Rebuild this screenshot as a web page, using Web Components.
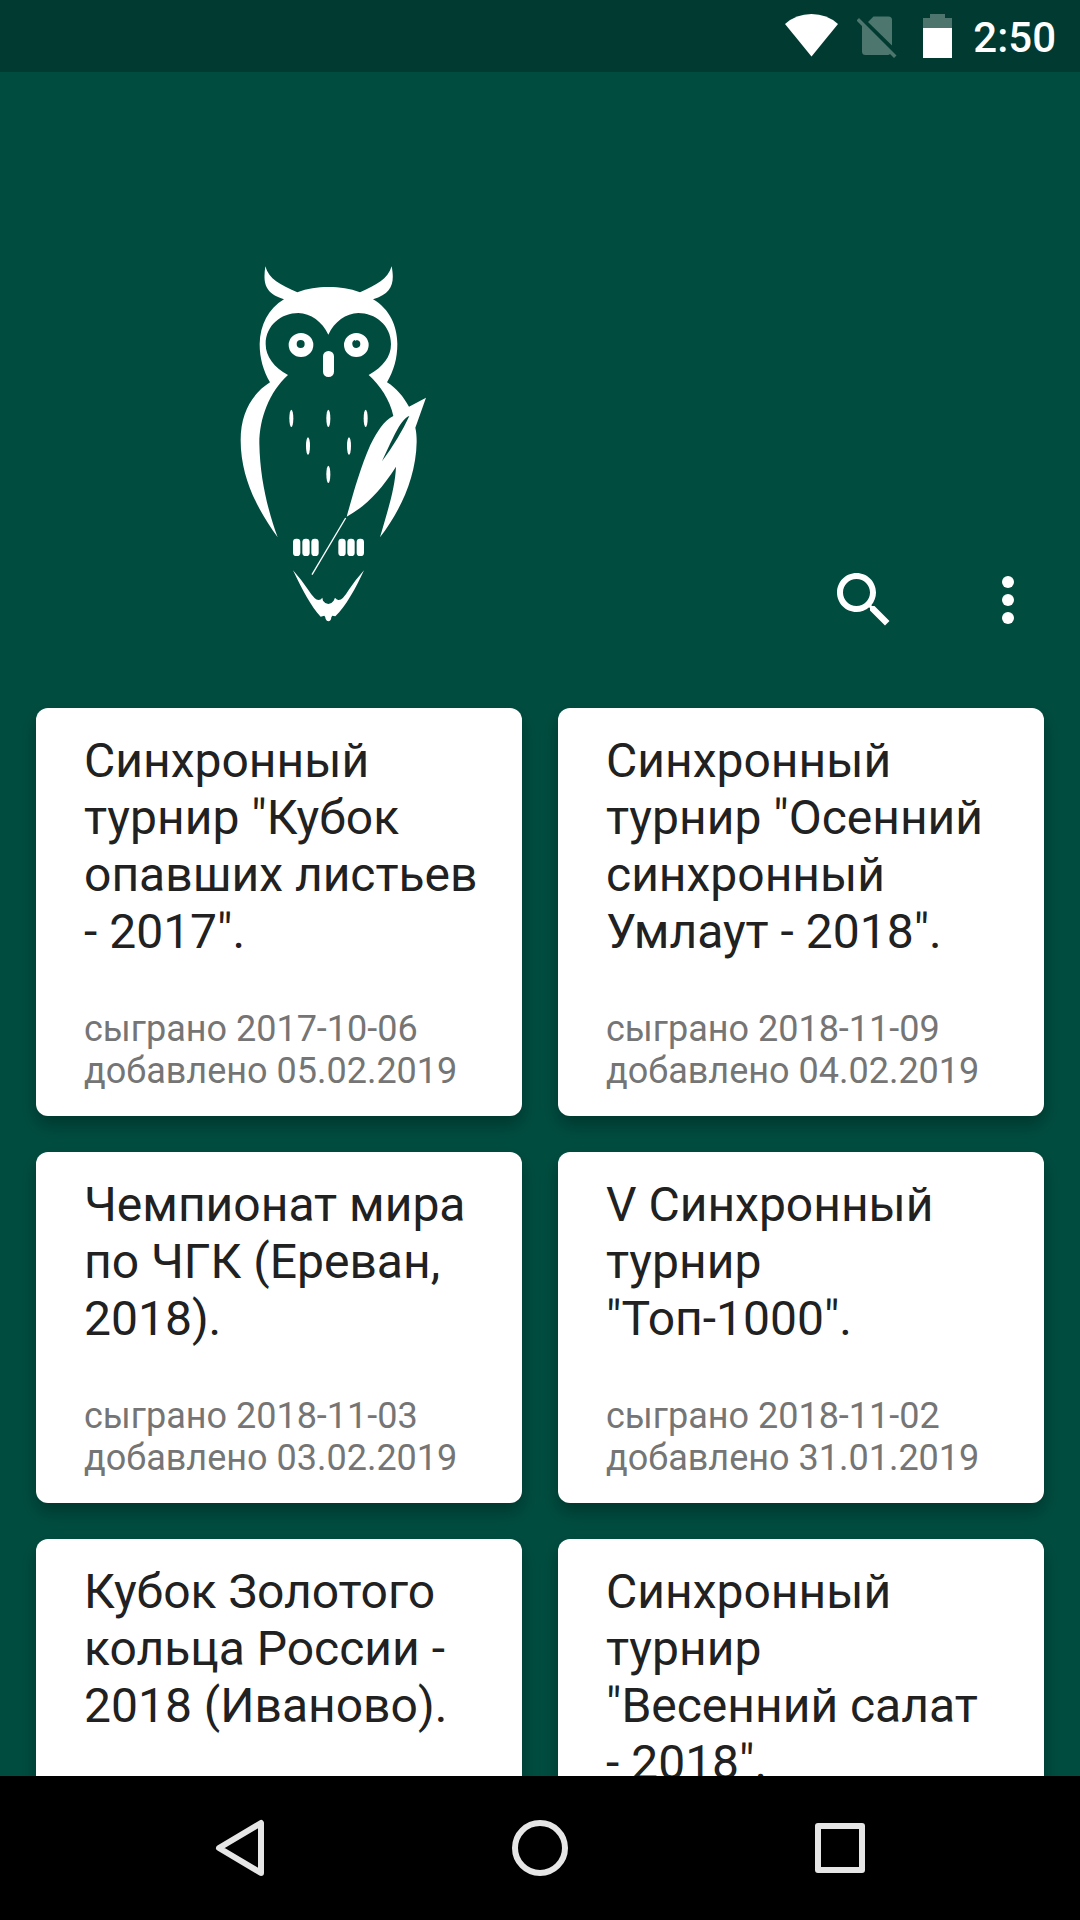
<!DOCTYPE html>
<html lang="ru">
<head>
<meta charset="utf-8">
<meta name="viewport" content="width=device-width, initial-scale=1">
<title>Турниры</title>
<style>
  body {
    margin: 0;
    background: #004d40;
    font-family: Roboto, "Noto Sans", sans-serif;
  }
</style>
</head>
<body>
<quiz-app>
  <status-bar slot="status" time="2:50"></status-bar>
  <app-header></app-header>
  <tournament-list>
    <tournament-card played="2017-10-06" added="05.02.2019">Синхронный турнир "Кубок опавших листьев - 2017".</tournament-card>
    <tournament-card played="2018-11-09" added="04.02.2019">Синхронный турнир "Осенний синхронный Умлаут - 2018".</tournament-card>
    <tournament-card played="2018-11-03" added="03.02.2019">Чемпионат мира по ЧГК (Ереван, 2018).</tournament-card>
    <tournament-card played="2018-11-02" added="31.01.2019">V Синхронный турнир "Топ-1000".</tournament-card>
    <tournament-card>Кубок Золотого кольца России - 2018 (Иваново).</tournament-card>
    <tournament-card>Синхронный турнир "Весенний салат - 2018".</tournament-card>
  </tournament-list>
  <system-nav slot="nav"></system-nav>
</quiz-app>

<script>
class QuizApp extends HTMLElement {
  constructor() {
    super();
    this.attachShadow({ mode: "open" });
    this.shadowRoot.innerHTML = `
      <style>
        :host {
          display: flex;
          flex-direction: column;
          height: 100vh;
        }
        main {
          flex: 1;
          min-height: 0;
          overflow-y: auto;
          scrollbar-width: none;
        }
      </style>
      <slot name="status"></slot>
      <main><slot></slot></main>
      <slot name="nav"></slot>
    `;
  }
}

class StatusBar extends HTMLElement {
  constructor() {
    super();
    this.attachShadow({ mode: "open" });
  }

  connectedCallback() {
    this.shadowRoot.innerHTML = `
      <style>
        :host {
          display: flex;
          justify-content: flex-end;
          align-items: flex-start;
          gap: 18px;
          height: 72px;
          padding: 0 24px;
          background: #003a30;
          color: #fff;
          font-size: 42px;
          font-weight: 500;
          line-height: 76px;
        }
        svg {
          display: block;
          fill: #fff;
        }
        .dim {
          opacity: 0.3;
        }
      </style>
      <svg width="54" height="72" viewBox="0 0 54 72" aria-hidden="true">
        <path d="M0 24Q11 14 26.500 14T53 24L26.500 56.500Z"/>
      </svg>
      <svg width="44" height="72" viewBox="0 0 44 72" aria-hidden="true">
        <g class="dim">
          <path d="M11 22L16.500 16.500H31.500Q35 16.500 35 20V45.500Z"/>
          <path d="M2 18L39.500 55.500L37 58L33 54Q32 55 31 55H8.500Q5 55 5 51.500V26L-.500 20.500Z"/>
        </g>
      </svg>
      <svg width="36" height="72" viewBox="0 0 36 72" aria-hidden="true">
        <path class="dim" d="M4 28V18H11V14H26V18H33V28Z"/>
        <path d="M4 28H33V58H4Z"/>
      </svg>
      <time>${this.getAttribute("time")}</time>
    `;
  }
}

class OwlLogo extends HTMLElement {
  constructor() {
    super();
    this.attachShadow({ mode: "open" });
    this.shadowRoot.innerHTML = `
      <style>
        :host {
          display: block;
          width: 230px;
        }
        svg {
          display: block;
          width: 100%;
          fill: #fff;
        }
      </style>
      <svg viewBox="0 0 690 1170" role="img" aria-label="Сова">
        <!-- head, wings and feather -->
        <path fill-rule="evenodd" d="M136 49C147 88 180 104 232 127C262 115 292 111 325 111C360 111 390 115 420 127
          C470 104 503 88 515 49C524 98 518 130 459 148C508 176 532 228 532 282C532 325 522 360 501 397
          C530 415 550 440 567 470L618 443L586 533C589 545 590 560 590 575C588 690 535 790 480 862
          C505 775 525 715 528 650C480 725 435 770 380 800C400 730 420 655 451 585C472 543 492 512 520 498
          C510 450 480 405 446 375C490 350 513 320 513 282C513 225 465 189 415 189C378 190 343 215 325 254
          C307 215 272 190 235 189C185 189 137 225 137 282C137 320 162 352 204 375C148 426 118 505 118 580
          C120 690 145 785 173 862C118 785 62 690 62 570C62 490 95 432 150 397C130 362 119 325 119 282
          C120 225 145 176 192 148C133 130 129 98 136 49Z
          M568 498C545 505 525 550 486 634Q537 565 568 498Z"/>
        <!-- eyes -->
        <path fill-rule="evenodd" d="M206 285a37 36 0 1 0 74 0a37 36 0 1 0-74 0ZM230 282a12 12 0 1 0 24 0a12 12 0 1 0-24 0Z"/>
        <path fill-rule="evenodd" d="M372 285a37 36 0 1 0 74 0a37 36 0 1 0-74 0ZM397 283a12 12 0 0 1 7-13q3 5 6 0a12 12 0 1 1-13 13Z"/>
        <rect x="309" y="303" width="33" height="78" rx="16"/>
        <!-- chest -->
        <ellipse cx="214" cy="505" rx="6" ry="26"/>
        <ellipse cx="325" cy="505" rx="6" ry="26"/>
        <ellipse cx="437" cy="505" rx="6" ry="26"/>
        <ellipse cx="264" cy="588" rx="6" ry="26"/>
        <ellipse cx="387" cy="588" rx="6" ry="26"/>
        <ellipse cx="325" cy="673" rx="6" ry="26"/>
        <path d="M377 804L276 974" stroke="#fff" stroke-width="4"/>
        <!-- claws -->
        <rect x="219" y="866" width="22" height="52" rx="10"/>
        <rect x="247" y="866" width="22" height="52" rx="10"/>
        <rect x="274" y="866" width="22" height="52" rx="10"/>
        <rect x="355" y="866" width="22" height="52" rx="10"/>
        <rect x="382" y="866" width="22" height="52" rx="10"/>
        <rect x="410" y="866" width="22" height="52" rx="10"/>
        <!-- tail -->
        <path d="M219 961C245 1015 273 1070 302 1100Q307 1099 313 1097Q316 1100 317 1107Q320 1114 325 1114
          Q331 1114 333 1108Q333 1100 337 1097L346 1099C377 1070 407 1015 432 961Q406 990 386 1020
          Q367 1052 355 1050Q349 1048 345 1043L341 1052Q334 1062 325 1062Q314 1060 309 1052L307 1043
          Q302 1050 296 1050Q284 1050 265 1020Q245 990 219 961Z"/>
      </svg>
    `;
  }
}

class AppHeader extends HTMLElement {
  constructor() {
    super();
    this.attachShadow({ mode: "open" });
    this.shadowRoot.innerHTML = `
      <style>
        header {
          display: flex;
          justify-content: space-between;
          align-items: flex-end;
          padding: 178px 32px 44px 220px;
        }
        .actions {
          display: flex;
          gap: 64px;
        }
        button {
          display: grid;
          place-items: center;
          width: 80px;
          height: 80px;
          padding: 0;
          border: 0;
          background: none;
          cursor: pointer;
        }
        svg {
          width: 72px;
          height: 72px;
          fill: #fff;
        }
      </style>
      <header>
        <owl-logo></owl-logo>
        <div class="actions">
          <button type="button" aria-label="Поиск">
            <svg viewBox="0 0 24 24"><path d="M15.500 14h-.79l-.28-.27C15.410 12.590 16 11.110 16 9.500 16 5.910 13.090 3 9.500 3S3 5.910 3 9.500 5.910 16 9.500 16c1.610 0 3.090-.59 4.230-1.570l.27.28v.79l5 4.990L20.490 19l-4.990-5zm-6 0C7.010 14 5 11.990 5 9.500S7.010 5 9.500 5 14 7.010 14 9.500 11.990 14 9.500 14z"/></svg>
          </button>
          <button type="button" aria-label="Меню">
            <svg viewBox="0 0 24 24"><circle cx="12" cy="6" r="2"/><circle cx="12" cy="12" r="2"/><circle cx="12" cy="18" r="2"/></svg>
          </button>
        </div>
      </header>
    `;
  }
}

class TournamentList extends HTMLElement {
  constructor() {
    super();
    this.attachShadow({ mode: "open" });
    this.shadowRoot.innerHTML = `
      <style>
        :host {
          display: grid;
          grid-template-columns: repeat(2, minmax(0, 1fr));
          gap: 36px;
          padding: 24px 36px 36px;
        }
      </style>
      <slot></slot>
    `;
  }
}

class TournamentCard extends HTMLElement {
  constructor() {
    super();
    this.attachShadow({ mode: "open" });
  }

  connectedCallback() {
    const played = this.getAttribute("played");
    const added = this.getAttribute("added");

    this.shadowRoot.innerHTML = `
      <style>
        :host {
          display: block;
          border-radius: 12px;
          background: #fff;
          box-shadow: 0 9px 18px rgba(0, 0, 0, 0.3);
        }
        article {
          display: flex;
          flex-direction: column;
          gap: 48px;
          padding: 24px 42px 24px 48px;
        }
        h2 {
          margin: 0;
          color: #212121;
          font-size: 48px;
          font-weight: 400;
          line-height: 57px;
        }
        .dates {
          color: #757575;
          font-size: 36px;
          line-height: 42px;
        }
      </style>
      <article>
        <h2><slot></slot></h2>
        <div class="dates">
          ${played ? `<div>сыграно ${played}</div>` : ""}
          ${added ? `<div>добавлено ${added}</div>` : ""}
        </div>
      </article>
    `;
  }
}

class SystemNav extends HTMLElement {
  constructor() {
    super();
    this.attachShadow({ mode: "open" });
    this.shadowRoot.innerHTML = `
      <style>
        nav {
          display: grid;
          grid-template-columns: repeat(3, 1fr);
          height: 144px;
          padding: 0 90px;
          background: #000;
        }
        button {
          display: grid;
          place-items: center;
          padding: 0;
          border: 0;
          background: none;
          cursor: pointer;
        }
        svg {
          width: 60px;
          height: 60px;
          fill: none;
          stroke: #e6e6e6;
          stroke-width: 6;
          stroke-linejoin: round;
        }
      </style>
      <nav>
        <button type="button" aria-label="Назад">
          <svg viewBox="0 0 60 60"><path d="M51 5V55L9 30Z"/></svg>
        </button>
        <button type="button" aria-label="Домой">
          <svg viewBox="0 0 60 60"><circle cx="30" cy="30" r="25"/></svg>
        </button>
        <button type="button" aria-label="Недавние">
          <svg viewBox="0 0 60 60"><rect x="8" y="8" width="44" height="44"/></svg>
        </button>
      </nav>
    `;
  }
}

customElements.define("status-bar", StatusBar);
customElements.define("owl-logo", OwlLogo);
customElements.define("app-header", AppHeader);
customElements.define("tournament-card", TournamentCard);
customElements.define("tournament-list", TournamentList);
customElements.define("system-nav", SystemNav);
customElements.define("quiz-app", QuizApp);
</script>
</body>
</html>
